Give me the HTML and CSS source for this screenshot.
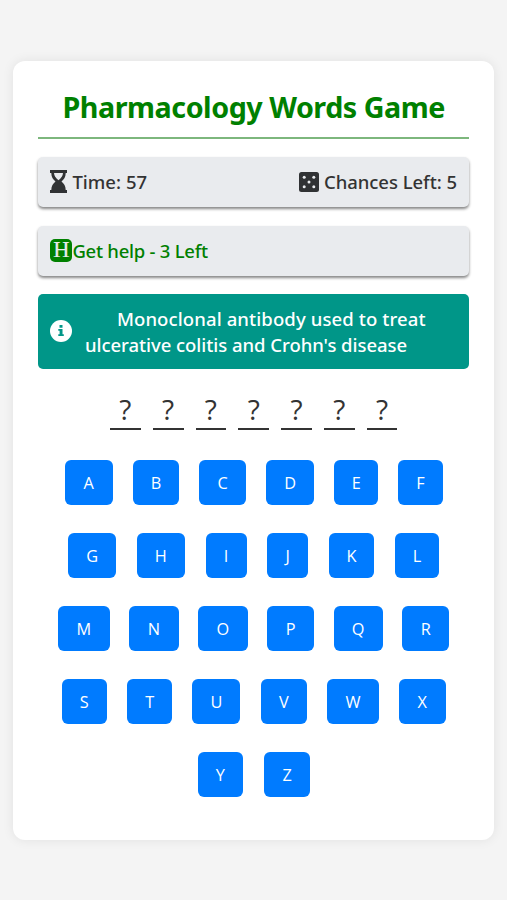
FILE: index.html
```html
<!DOCTYPE html>
<html lang="en">
<head>
<meta charset="utf-8">
<title>Pharmacology Words Game</title>
<link rel="stylesheet" href="styles.css">
</head>
<body>
<main class="card">
  <h1 class="title"><span>Pharmacology Words Game</span></h1>
  <section class="bar stats">
    <div class="stat">
      <svg class="hourglass" viewBox="0 0 17 23"><path fill="#303234" fill-rule="evenodd" d="M0 0h17v3h-1.300c0 4-1.700 6.400-4.200 8.500 2.500 2.100 4.200 4.500 4.200 8.500H17v3H0v-3h1.300c0-4 1.700-6.400 4.200-8.500C3 9.400 1.300 7 1.300 3H0zM4 3c.2 2.800 1.500 5 4.500 7.300C11.500 8 12.800 5.800 13 3z"/></svg>
      <span class="time">Time: 57</span>
    </div>
    <div class="stat">
      <svg class="dice" viewBox="0 0 20 20"><rect width="20" height="20" rx="2.500" fill="#303234"/><g fill="#e9ebee"><circle cx="5.200" cy="5.200" r="1.500"/><circle cx="14.800" cy="5.200" r="1.500"/><circle cx="10" cy="10" r="1.500"/><circle cx="5.200" cy="14.800" r="1.500"/><circle cx="14.800" cy="14.800" r="1.500"/></g></svg>
      <span class="chances">Chances Left: 5</span>
    </div>
  </section>
  <section class="bar help">
    <span class="help-icon">H</span>
    <span class="help-text">Get help - 3 Left</span>
  </section>
  <section class="hint">
    <svg class="info" viewBox="0 0 22 22"><circle cx="11" cy="11" r="11" fill="#fff"/><path fill="#009688" d="M9.500 5h3v2.700h-3zM8.300 9h4.200v5.300h1.300v1.800H8.300v-1.800h1.300v-3.500H8.300z"/></svg>
    <p class="hint-text"><span class="line-one">Monoclonal antibody used to treat</span><br><span class="line-two">ulcerative colitis and Crohn's disease</span></p>
  </section>
  <div class="word">
    <span>?</span><span>?</span><span>?</span><span>?</span><span>?</span><span>?</span><span>?</span>
  </div>
  <div class="keyboard">
    <div class="row row-1"><button class="k48">A</button><button class="k47">B</button><button class="k47">C</button><button class="k48">D</button><button class="k44">E</button><button class="k44">F</button></div>
    <div class="row row-2"><button class="k48">G</button><button class="k48">H</button><button class="k41">I</button><button class="k41">J</button><button class="k45">K</button><button class="k44">L</button></div>
    <div class="row row-3"><button class="k51">M</button><button class="k49">N</button><button class="k49">O</button><button class="k47">P</button><button class="k49">Q</button><button class="k47">R</button></div>
    <div class="row row-4"><button class="k45">S</button><button class="k45">T</button><button class="k48">U</button><button class="k47">V</button><button class="k51">W</button><button class="k47">X</button></div>
    <div class="row row-5"><button class="k45">Y</button><button class="k45">Z</button></div>
  </div>
</main>
</body>
</html>
```
FILE: styles.css
```css
* { box-sizing: border-box; }
body {
  margin: 0;
  height: 900px;
  padding: 61px 13px 0 13.400px;
  background: #f4f4f4;
  font-family: "Open Sans", "Noto Sans", sans-serif;
  color: #333;
  overflow: hidden;
}
.card {
  height: 778.500px;
  padding: 25px 25px 0;
  background: #fff;
  border-radius: 12px;
  box-shadow: 0 0 12px rgba(0, 0, 0, .08);
}
.title {
  margin: 0;
  height: 52.500px;
  border-bottom: 2px solid #7db77d;
  color: #008000;
  font-family: "Noto Sans", sans-serif;
  font-size: 28.700px;
  font-weight: 700;
  line-height: 42px;
  letter-spacing: -.47px;
  text-align: center;
  white-space: nowrap;
}
.bar {
  display: flex;
  align-items: center;
  height: 50px;
  padding: 0 12px;
  border-radius: 5px;
  background: #e9ebee;
  box-shadow: 0 2px 3px rgba(0, 0, 0, .48);
  font-family: "Noto Sans", sans-serif;
  font-size: 18.500px;
  font-weight: 500;
  white-space: nowrap;
}
.stats { margin-top: 18px; justify-content: space-between; }
.stat { display: flex; align-items: center; }
.hourglass { width: 17px; height: 23px; margin-right: 5px; }
.dice { width: 20px; height: 20px; margin-right: 5px; }
.time { letter-spacing: .02px; }
.chances { letter-spacing: -.04px; }
.help { margin-top: 19px; color: #008000; }
.help-icon {
  width: 22px;
  height: 23px;
  border-radius: 5px;
  background: #008000;
  color: #e9ebee;
  font-family: "Liberation Serif", serif;
  font-size: 22.500px;
  line-height: 22px;
  text-align: center;
  -webkit-text-stroke: .2px #e9ebee;
}
.help-text { letter-spacing: -.25px; }
.hint {
  display: flex;
  align-items: center;
  height: 75.500px;
  margin-top: 18px;
  padding: 0 12px;
  border-radius: 5px;
  background: #009688;
  color: #fff;
}
.info { width: 22px; height: 22px; flex: none; }
.hint-text {
  margin: 1px 0 0 12.500px;
  font-family: "Noto Sans", sans-serif;
  font-size: 18.500px;
  font-weight: 500;
  line-height: 25.500px;
  white-space: nowrap;
}
.line-one { margin-left: 32px; letter-spacing: .11px; }
.line-two { letter-spacing: -.04px; }
.word {
  display: flex;
  justify-content: center;
  gap: 12px;
  margin-top: 19px;
}
.word span {
  width: 30.800px;
  height: 41.500px;
  border-bottom: 2.500px solid #333;
  font-size: 28px;
  line-height: 42px;
  text-align: center;
}
.keyboard {
  display: flex;
  flex-direction: column;
  align-items: center;
  gap: 27.900px;
  margin-top: 30.500px;
}
.row { display: flex; justify-content: space-between; }
.row-1 { width: 378px; }
.row-2 { width: 371px; }
.row-3 { width: 391px; }
.row-4 { width: 384px; }
.row-5 { width: 112px; }
.row button {
  height: 45px;
  padding: 0;
  border: 0;
  border-radius: 6px;
  background: #007bff;
  color: #fff;
  font-family: "Open Sans", sans-serif;
  font-size: 16.300px;
  line-height: 47px;
}
.k41 { width: 41px; }
.k44 { width: 44.300px; }
.k45 { width: 45.300px; }
.k47 { width: 46.700px; }
.k48 { width: 48px; }
.k49 { width: 49.300px; }
.k51 { width: 51.500px; }
```
